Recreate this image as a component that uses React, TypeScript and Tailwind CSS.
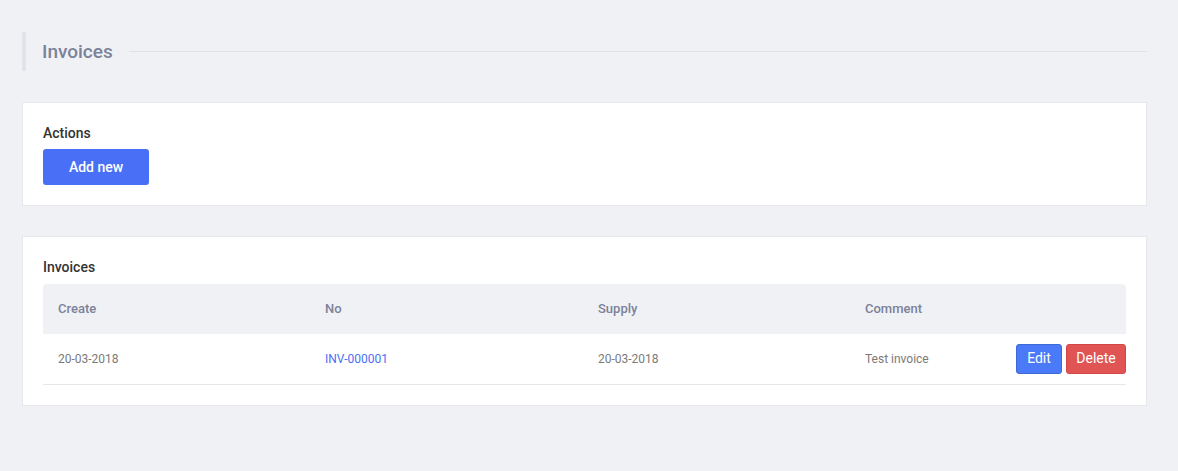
import React from "react";

const rows = [
  { create: "20-03-2018", no: "INV-000001", supply: "20-03-2018", comment: "Test invoice" },
];

export default function App() {
  return (
    <div className="min-h-[471px] bg-[#f0f1f5] pl-[22px] pr-[31px] pt-[32px] pb-[65px] font-['Roboto',sans-serif]">
      <div className="flex items-center h-[39px]">
        <div className="w-[4px] h-full bg-[#e1e3e9]" />
        <h1 className="ml-[16px] text-[19px] font-medium text-[#7b8299] leading-none">Invoices</h1>
        <div className="flex-1 ml-[16px] h-px bg-[#e1e3e9]" />
      </div>

      <div className="mt-[31px] bg-white border border-[#e6e7eb] px-[20px] pt-[21px] pb-[20px]">
        <div className="text-[14px] font-medium text-[#333] leading-[18px]">Actions</div>
        <button className="mt-[7px] w-[106px] h-[36px] rounded-[3px] bg-[#4a6ff7] text-white text-[14px] font-medium">
          Add new
        </button>
      </div>

      <div className="mt-[30px] bg-white border border-[#e6e7eb] px-[20px] pt-[21px] pb-[20px]">
        <div className="text-[14px] font-medium text-[#333] leading-[18px]">Invoices</div>
        <table className="mt-[8px] w-full border-collapse">
          <thead>
            <tr className="h-[50px] text-left text-[13px] text-[#7b8299]">
              <th className="w-[267px] pl-[15px] font-medium bg-[#f0f1f5] rounded-tl-[4px]">Create</th>
              <th className="w-[273px] pl-[15px] font-medium bg-[#f0f1f5]">No</th>
              <th className="w-[267px] pl-[15px] font-medium bg-[#f0f1f5]">Supply</th>
              <th className="pl-[15px] font-medium bg-[#f0f1f5]">Comment</th>
              <th className="bg-[#f0f1f5] rounded-tr-[4px]" />
            </tr>
          </thead>
          <tbody>
            {rows.map((r) => (
              <tr key={r.no} className="h-[50px] border-b border-[#e6e7eb] text-[12px] text-[#7a7a7a]">
                <td className="pl-[15px]">{r.create}</td>
                <td className="pl-[15px]">
                  <a className="text-[#4a6ff7]">{r.no}</a>
                </td>
                <td className="pl-[15px]">{r.supply}</td>
                <td className="pl-[15px]">{r.comment}</td>
                <td className="text-right">
                  <div className="flex justify-end gap-[4px]">
                    <button className="w-[46px] h-[30px] rounded-[3px] bg-[#4a7af7] border border-[#3d6ad6] text-white text-[14px]">
                      Edit
                    </button>
                    <button className="w-[60px] h-[30px] rounded-[3px] bg-[#e05454] border border-[#d24646] text-white text-[14px]">
                      Delete
                    </button>
                  </div>
                </td>
              </tr>
            ))}
          </tbody>
        </table>
      </div>
    </div>
  );
}
